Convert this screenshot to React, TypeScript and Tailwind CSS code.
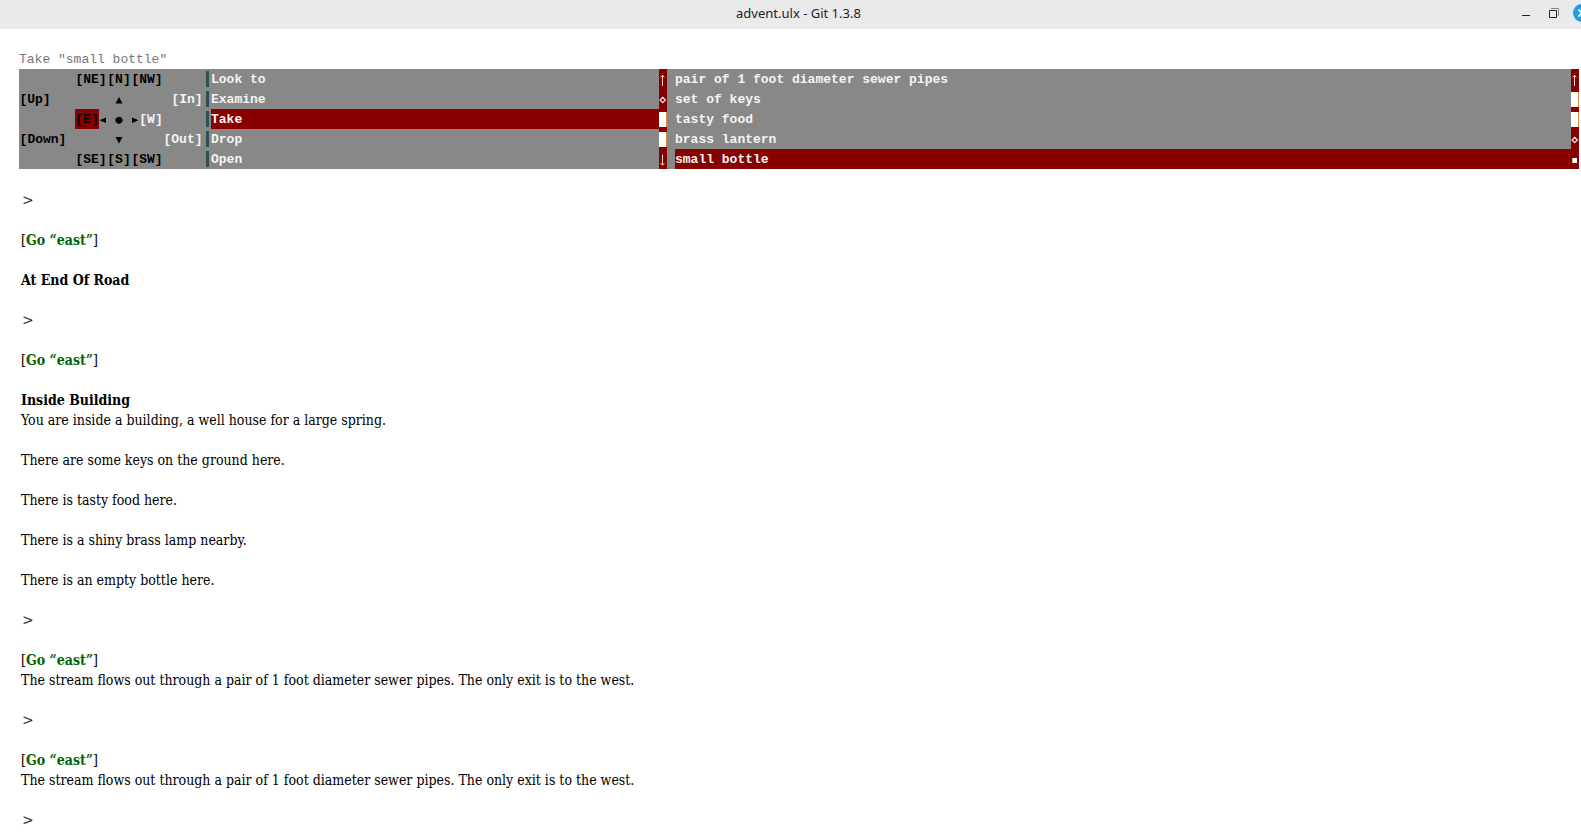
import React from "react";

type Cell = { label: string; place: string; tone?: string };

const compass: Cell[] = [
  { label: "[NE]", place: "col-start-8 col-span-4 row-start-1" },
  { label: "[N]", place: "col-start-12 col-span-3 row-start-1" },
  { label: "[NW]", place: "col-start-15 col-span-4 row-start-1" },
  { label: "[Up]", place: "col-start-1 col-span-4 row-start-2" },
  { label: "[In]", place: "col-start-20 col-span-4 row-start-2", tone: "text-[#f4f4f4]" },
  { label: "[E]", place: "col-start-8 col-span-3 row-start-3", tone: "bg-[#880000]" },
  { label: "[W]", place: "col-start-16 col-span-3 row-start-3", tone: "text-[#f4f4f4]" },
  { label: "[Down]", place: "col-start-1 col-span-6 row-start-4" },
  { label: "[Out]", place: "col-start-19 col-span-5 row-start-4", tone: "text-[#f4f4f4]" },
  { label: "[SE]", place: "col-start-8 col-span-4 row-start-5" },
  { label: "[S]", place: "col-start-12 col-span-3 row-start-5" },
  { label: "[SW]", place: "col-start-15 col-span-4 row-start-5" },
];

const needles = [
  { d: "M4 8 L7.5 14.5 H0.5 Z", place: "col-start-13 row-start-2" },
  { d: "M0.5 11.2 L7 8.4 V14 Z", place: "col-start-11 row-start-3" },
  { d: "M4 7.7 A3.6 3.6 0 1 1 3.99 7.7 Z", place: "col-start-13 row-start-3" },
  { d: "M7.5 11.2 L1 8.4 V14 Z", place: "col-start-15 row-start-3" },
  { d: "M4 14.5 L7.5 8 H0.5 Z", place: "col-start-13 row-start-4" },
];

const verbs = ["Look to", "Examine", "Take", "Drop", "Open"];
const nouns = [
  "pair of 1 foot diameter sewer pipes",
  "set of keys",
  "tasty food",
  "brass lantern",
  "small bottle",
];

type Mark = "up" | "down" | "diamond" | "block" | "dot";

function ScrollMark({ kind }: { kind: Mark }) {
  return (
    <svg width="8" height="20" viewBox="0 0 8 20" fill="none" stroke="#f0dede" aria-hidden="true">
      {kind === "up" && <path d="M3.5 17 V6.5 M1.7 8.3 L3.5 6.3 L5.3 8.3" />}
      {kind === "down" && <path d="M3.5 5.5 V16 M1.7 14.2 L3.5 16.2 L5.3 14.2" />}
      {kind === "diamond" && <path d="M3.7 8.3 L6.4 11 L3.7 13.7 L1 11 Z" strokeWidth="1.3" />}
      {kind === "block" && (
        <g stroke="none">
          <path d="M0 3 H8 V18 H0 Z" fill="#fff" />
          <path d="M7 3 H8 V18 H7 Z" fill="#e0883c" />
        </g>
      )}
      {kind === "dot" && <path d="M1.3 9 H6 V14 H1.3 Z" fill="#fff" stroke="none" />}
    </svg>
  );
}

function ScrollColumn({ marks, label }: { marks: Mark[]; label: string }) {
  return (
    <div className="flex w-2 shrink-0 flex-col bg-[#880000]" aria-label={label}>
      {marks.map((kind, i) => (
        <ScrollMark key={i} kind={kind} />
      ))}
    </div>
  );
}

function Choices({ items, chosen }: { items: string[]; chosen: string }) {
  return (
    <div className="flex min-w-0 flex-1 flex-col">
      {items.map((item) => (
        <button
          key={item}
          className={
            item === chosen
              ? "h-5 overflow-hidden bg-[#880000] pt-[2px] text-left leading-[18px] whitespace-nowrap"
              : "h-5 overflow-hidden pt-[2px] text-left leading-[18px] whitespace-nowrap"
          }
        >
          {item}
        </button>
      ))}
    </div>
  );
}

const Prompt = () => (
  <p className="mb-5 pl-px font-['DejaVu_Serif',serif] text-[#333]">&gt;</p>
);

const Echo = () => (
  <p>
    [<b className="text-[#006600]">Go “east”</b>]
  </p>
);

const stream =
  "The stream flows out through a pair of 1 foot diameter sewer pipes. The only exit is to the west.";

export default function App() {
  return (
    <div className="min-h-screen overflow-hidden bg-white text-black">
      <header className="grid h-[29px] grid-cols-[1fr_auto_1fr] items-center overflow-hidden bg-[#eaeaec] pb-[3px] pl-4 text-[#222]">
        <h1 className="col-start-2 font-['Noto_Sans',sans-serif] text-[13px] leading-5">
          advent.ulx - Git 1.3.8
        </h1>
        <div className="-mr-[10px] flex items-center justify-end gap-[10px]">
          <button aria-label="Minimize">
            <svg width="18" height="18" viewBox="0 0 18 18">
              <path d="M5 11.5 H13" stroke="#222" strokeWidth="1" />
            </svg>
          </button>
          <button aria-label="Restore">
            <svg width="18" height="18" viewBox="0 0 18 18" fill="none">
              <path d="M6 4.5 H13.5 V12" stroke="#888" />
              <path d="M4.5 6.5 H11.5 V13.5 H4.5 Z" stroke="#222" />
            </svg>
          </button>
          <button aria-label="Close">
            <svg width="18" height="18" viewBox="0 0 18 18">
              <circle cx="9" cy="9" r="9" fill="#1f9ede" />
              <path d="M5.5 5.5 L12.5 12.5 M12.5 5.5 L5.5 12.5" stroke="#fff" strokeWidth="1.8" />
            </svg>
          </button>
        </div>
      </header>

      <main className="pt-5 pl-[19px]">
        <section className="pr-[2px] font-['Liberation_Mono',monospace] text-[13px] leading-5">
          <p className="h-5 pt-[2px] leading-[18px] text-[#777]">Take "small bottle"</p>
          <div className="flex bg-[#888888] font-bold text-[#f4f4f4]">
            <div className="grid shrink-0 grid-cols-[repeat(23,8px)] grid-rows-[repeat(5,20px)] leading-[18px] text-black">
              {compass.map((c) => (
                <button key={c.label} className={`pt-[2px] ${c.place} ${c.tone ?? ""}`}>
                  {c.label}
                </button>
              ))}
              {needles.map((n) => (
                <svg
                  key={n.place}
                  className={n.place}
                  width="8"
                  height="20"
                  viewBox="0 0 8 20"
                  aria-hidden="true"
                >
                  <path d={n.d} />
                </svg>
              ))}
            </div>
            <div className="flex w-2 shrink-0 flex-col items-center gap-1 py-[2px]">
              {verbs.map((v) => (
                <span key={v} className="h-4 w-[3px] bg-[#2f4f55]" />
              ))}
            </div>
            <div className="flex w-1/3 pr-2 lg:w-[464px]">
              <Choices items={verbs} chosen="Take" />
              <ScrollColumn label="Verb list position" marks={["up", "diamond", "block", "block", "down"]} />
            </div>
            <Choices items={nouns} chosen="small bottle" />
            <ScrollColumn label="Object list position" marks={["up", "block", "block", "diamond", "dot"]} />
          </div>
        </section>

        <section className="pt-[21px] pl-[2px] font-['DejaVu_Serif_Condensed','DejaVu_Serif',serif] text-sm leading-5">
          <Prompt />
          <Echo />
          <h2 className="my-5 font-bold">At End Of Road</h2>
          <Prompt />
          <Echo />
          <h2 className="mt-5 font-bold">Inside Building</h2>
          <p className="mb-5">You are inside a building, a well house for a large spring.</p>
          <p className="mb-5">There are some keys on the ground here.</p>
          <p className="mb-5">There is tasty food here.</p>
          <p className="mb-5">There is a shiny brass lamp nearby.</p>
          <p className="mb-5">There is an empty bottle here.</p>
          <Prompt />
          <Echo />
          <p className="mb-5">{stream}</p>
          <Prompt />
          <Echo />
          <p className="mb-5">{stream}</p>
          <label className="flex h-5 gap-1 pl-px font-['DejaVu_Serif',serif] text-[#333]">
            <span>&gt;</span>
            <input aria-label="Command" className="min-w-0 flex-1 outline-none" />
          </label>
        </section>
      </main>
    </div>
  );
}
